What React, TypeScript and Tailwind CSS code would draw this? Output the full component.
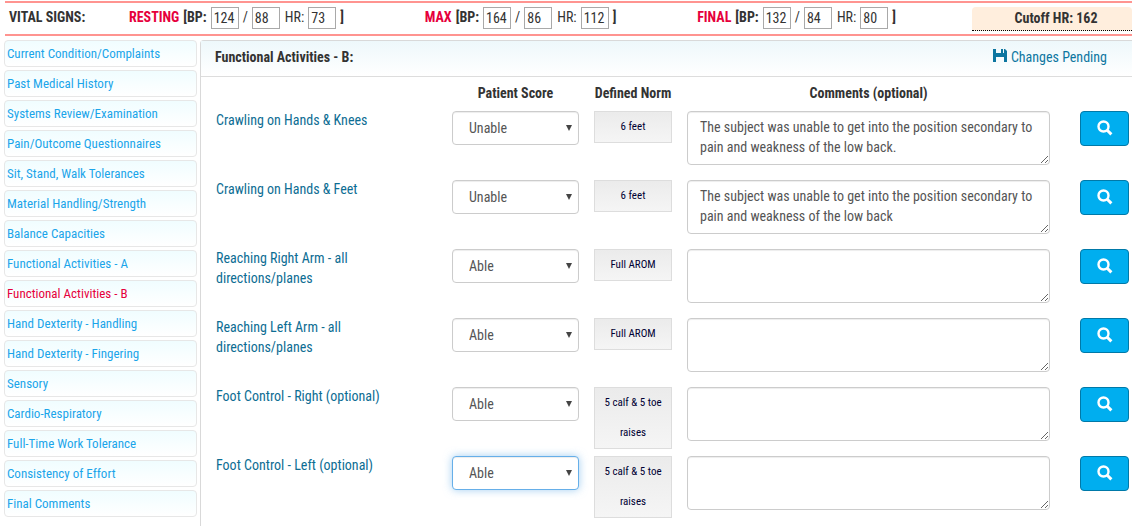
import { useState } from 'react'

type Reading = { label: string; sys: string; dia: string; hr: string }

type Activity = { name: string; score: string; norm: string; comment: string }

const readings: Reading[] = [
  { label: 'RESTING', sys: '124', dia: '88', hr: '73' },
  { label: 'MAX', sys: '164', dia: '86', hr: '112' },
  { label: 'FINAL', sys: '132', dia: '84', hr: '80' },
]

const sections = [
  'Current Condition/Complaints',
  'Past Medical History',
  'Systems Review/Examination',
  'Pain/Outcome Questionnaires',
  'Sit, Stand, Walk Tolerances',
  'Material Handling/Strength',
  'Balance Capacities',
  'Functional Activities - A',
  'Functional Activities - B',
  'Hand Dexterity - Handling',
  'Hand Dexterity - Fingering',
  'Sensory',
  'Cardio-Respiratory',
  'Full-Time Work Tolerance',
  'Consistency of Effort',
  'Final Comments',
]

const initialActivities: Activity[] = [
  {
    name: 'Crawling on Hands & Knees',
    score: 'Unable',
    norm: '6 feet',
    comment: 'The subject was unable to get into the position secondary to pain and weakness of the low back.',
  },
  {
    name: 'Crawling on Hands & Feet',
    score: 'Unable',
    norm: '6 feet',
    comment: 'The subject was unable to get into the position secondary to pain and weakness of the low back',
  },
  { name: 'Reaching Right Arm - all directions/planes', score: 'Able', norm: 'Full AROM', comment: '' },
  { name: 'Reaching Left Arm - all directions/planes', score: 'Able', norm: 'Full AROM', comment: '' },
  { name: 'Foot Control - Right (optional)', score: 'Able', norm: '5 calf & 5 toe raises', comment: '' },
  { name: 'Foot Control - Left (optional)', score: 'Able', norm: '5 calf & 5 toe raises', comment: '' },
]

function SaveIcon() {
  return (
    <svg className="mt-0.5" width="14" height="14" viewBox="0 0 14 14" fill="currentColor" aria-hidden="true">
      <path d="M0 0h3v4h5V0h2v4h1V0h1l2 2v11h-3V8H3v5H0z" />
    </svg>
  )
}

function SearchIcon() {
  return (
    <svg width="16" height="16" viewBox="0 0 16 16" fill="none" stroke="currentColor" aria-hidden="true">
      <circle cx="6.5" cy="6.5" r="5" strokeWidth="2.4" />
      <path d="M10.2 10.2l4.2 4.2" strokeWidth="3" />
    </svg>
  )
}

function VitalInput({ label, value }: { label: string; value: string }) {
  return (
    <input
      type="text"
      aria-label={label}
      defaultValue={value}
      className="h-[22px] w-7 border border-[#a9a9a9] bg-white px-[2px] text-sm text-[#333]"
    />
  )
}

function VitalGroup({ reading }: { reading: Reading }) {
  const { label, sys, dia, hr } = reading
  return (
    <div className="flex items-start gap-1">
      <span className="font-bold text-[#e6003c]">{label}</span>
      <span className="font-bold">[BP:</span>
      <VitalInput label={`${label} systolic`} value={sys} />
      <span>/</span>
      <VitalInput label={`${label} diastolic`} value={dia} />
      <span className="pl-px">HR:</span>
      <VitalInput label={`${label} heart rate`} value={hr} />
      <span className="font-bold">]</span>
    </div>
  )
}

export default function App() {
  const [active, setActive] = useState('Functional Activities - B')
  const [activities, setActivities] = useState<Activity[]>(initialActivities)

  const updateActivity = (index: number, field: keyof Activity, value: string) => {
    setActivities((prev) => prev.map((a, i) => (i === index ? { ...a, [field]: value } : a)))
  }

  return (
    <div className="overflow-hidden bg-white pt-px font-['Roboto_Condensed','Liberation_Sans_Narrow',Roboto,sans-serif] text-sm leading-5 text-[#333]">
      {/* vital signs bar */}
      <header className="ml-[5px] flex h-[35px] items-start border-y-2 border-[#ff9490] pt-1 pl-1">
        <span className="w-[120px] font-bold">VITAL SIGNS:</span>
        <div className="flex flex-1 items-start justify-between pr-[76px]">
          {readings.map((r) => (
            <VitalGroup key={r.label} reading={r} />
          ))}
        </div>
        <div className="w-40 rounded-t-sm border-b border-dotted border-black bg-[#ffeedd] pl-2 text-center leading-[23px] font-bold">
          Cutoff HR: 162
        </div>
      </header>

      <div className="flex pt-1 pl-1">
        {/* section menu */}
        <nav className="flex w-[193px] shrink-0 flex-col gap-[3px]">
          {sections.map((s) => (
            <a
              key={s}
              href="#"
              onClick={(e) => {
                e.preventDefault()
                setActive(s)
              }}
              className={`block h-[27px] rounded-sm border border-[#e7e7e7] bg-linear-to-b from-[#f0fdff] to-white pl-[2px] text-[13px] leading-[25px] ${
                s === active ? 'text-[#e6003c]' : 'text-[#1ba5ea]'
              }`}
            >
              {s}
            </a>
          ))}
        </nav>

        <main className="ml-[3px] min-w-0 flex-1 rounded-tl border-t border-l border-[#d9d9d9] pb-2">
          <div className="flex h-9 items-start justify-between border-b border-[#ddd] bg-linear-to-b from-[#eef8fb] to-white pt-1.5 pr-[25px] pl-[14px]">
            <h1 className="font-bold">Functional Activities - B:</h1>
            <a href="#" className="flex items-start gap-1 text-[#0d76a0]">
              <SaveIcon />
              Changes Pending
            </a>
          </div>

          <div className="pr-[3px] pl-[15px]">
            <div className="flex pt-1.5 pb-2 text-center font-bold">
              <div className="w-[236px]" />
              <div className="w-[127px]">Patient Score</div>
              <div className="mx-[15px] w-[78px] whitespace-nowrap">Defined Norm</div>
              <div className="flex-1">Comments (optional)</div>
              <div className="w-[79px]" />
            </div>

            {activities.map((a, i) => (
              <div key={a.name} className="flex min-h-[69px] items-start">
                <div className="-mt-px w-[236px] pr-[60px]">
                  <a href="#" className="text-[#0d6d93]">
                    {a.name}
                  </a>
                </div>
                <div className="relative w-[127px]">
                  <select
                    aria-label={`${a.name} score`}
                    value={a.score}
                    onChange={(e) => updateActivity(i, 'score', e.target.value)}
                    className={`h-[34px] w-full appearance-none rounded border bg-white px-4 text-[#555] outline-none ${
                      i === activities.length - 1
                        ? 'border-[#66afe9] shadow-[inset_0_1px_1px_rgba(0,0,0,0.075),0_0_8px_rgba(102,175,233,0.6)]'
                        : 'border-[#ccc] shadow-[inset_0_1px_1px_rgba(0,0,0,0.075)]'
                    }`}
                  >
                    <option>Able</option>
                    <option>Unable</option>
                  </select>
                  <svg
                    className="pointer-events-none absolute top-[14px] right-[7px] text-[#444]"
                    width="6"
                    height="6"
                    viewBox="0 0 6 6"
                    fill="currentColor"
                    aria-hidden="true"
                  >
                    <path d="M0 0h6L3 6z" />
                  </svg>
                </div>
                <div className="mx-[15px] w-[78px] border border-[#ddd] bg-linear-to-b from-[#ebebeb] to-[#f5f5f5] px-2 text-center text-[11px] leading-[30px] text-[#003]">
                  {a.norm}
                </div>
                <textarea
                  aria-label={`${a.name} comments`}
                  value={a.comment}
                  onChange={(e) => updateActivity(i, 'comment', e.target.value)}
                  className="h-[54px] min-w-0 flex-1 rounded border border-[#ccc] bg-white px-3 py-[5px] leading-5 text-[#555] shadow-[inset_0_1px_1px_rgba(0,0,0,0.075)]"
                />
                <button
                  type="button"
                  aria-label={`Search ${a.name}`}
                  className="ml-[30px] flex h-[35px] w-[49px] items-start justify-center rounded border border-[#0079a8] bg-[#00aeef] pt-2 text-white"
                >
                  <SearchIcon />
                </button>
              </div>
            ))}
          </div>
        </main>
      </div>
    </div>
  )
}
